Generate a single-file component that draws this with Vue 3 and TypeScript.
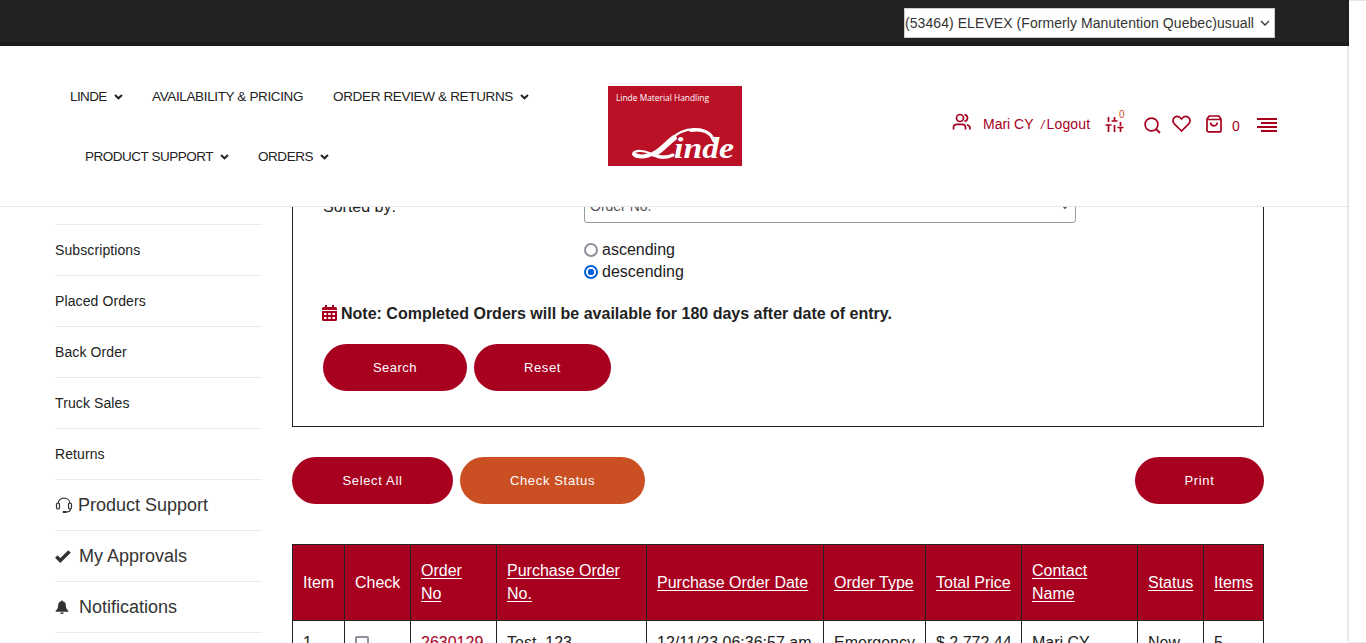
<script setup lang="ts">
interface NavItem { label: string; cls: string; arrow: boolean }
const primary: NavItem[] = [
  { label: 'LINDE', cls: 'n-linde', arrow: true },
  { label: 'AVAILABILITY & PRICING', cls: 'n-avail', arrow: false },
  { label: 'ORDER REVIEW & RETURNS', cls: 'n-review', arrow: true },
]
const secondary: NavItem[] = [
  { label: 'PRODUCT SUPPORT', cls: 'n-support', arrow: true },
  { label: 'ORDERS', cls: 'n-orders', arrow: true },
]
const links: string[] = ['Subscriptions', 'Placed Orders', 'Back Order', 'Truck Sales', 'Returns']
const columns: { label: string; sortable: boolean; width: number }[] = [
  { label: 'Item', sortable: false, width: 52 },
  { label: 'Check', sortable: false, width: 66 },
  { label: 'Order No', sortable: true, width: 86 },
  { label: 'Purchase Order No.', sortable: true, width: 150 },
  { label: 'Purchase Order Date', sortable: true, width: 177 },
  { label: 'Order Type', sortable: true, width: 102 },
  { label: 'Total Price', sortable: true, width: 96 },
  { label: 'Contact Name', sortable: true, width: 116 },
  { label: 'Status', sortable: true, width: 66 },
  { label: 'Items', sortable: true, width: 61 },
]
const row: string[] = ['1', '', '2630129', 'Test_123', '12/11/23 06:36:57 am', 'Emergency', '$ 2,772.44', 'Mari CY', 'New', '5']
</script>

<template>
  <div class="page">
    <div class="topbar">
      <div class="account">
        <span>(53464) ELEVEX (Formerly Manutention Quebec)usuall</span>
        <svg width="10" height="8" viewBox="0 0 10 8"><path d="M1 2l4 4 4-4" fill="none" stroke="#333" stroke-width="1.4" /></svg>
      </div>
    </div>
    <header class="header">
      <nav class="nav">
        <div class="nav-row">
          <a v-for="n in primary" :key="n.label" :class="['nav-item', n.cls]">
            <span>{{ n.label }}</span>
            <svg v-if="n.arrow" width="9" height="6" viewBox="0 0 9 6"><path d="M1 1l3.5 3.3L8 1" fill="none" stroke="#222" stroke-width="2" /></svg>
          </a>
        </div>
        <div class="nav-row second">
          <a v-for="n in secondary" :key="n.label" :class="['nav-item', n.cls]">
            <span>{{ n.label }}</span>
            <svg v-if="n.arrow" width="9" height="6" viewBox="0 0 9 6"><path d="M1 1l3.5 3.3L8 1" fill="none" stroke="#222" stroke-width="2" /></svg>
          </a>
        </div>
      </nav>
      <svg class="logo" width="134" height="80" viewBox="0 0 134 80">
        <rect width="134" height="80" fill="#ba1126" />
        <text x="8" y="15.3" class="logo-small" textLength="93" lengthAdjust="spacingAndGlyphs">Linde Material Handling</text>
        <text x="66" y="71.5" class="logo-word" textLength="60" lengthAdjust="spacingAndGlyphs">inde</text>
        <g fill="none" stroke="#fff" stroke-linecap="round">
          <path d="M105 54C102 42 84 41 73 46C61 52 55 61 47 67C40 71.500 34 72 29 71C22 69 25 64.500 33 65C43 65.500 49 73 63 70" stroke-width="2.200" />
          <path d="M66 52C59 57 54 64 46 68" stroke-width="5.500" />
          <path d="M83 44.500C94 42.500 103 46 106 55" stroke-width="3.200" />
          <path d="M27 68.500C31 71 36 70.500 41 68.500" stroke-width="3.500" />
          <path d="M46 69C51 72 58 72 65 69" stroke-width="3" />
        </g>
      </svg>
      <div class="tools">
        <svg class="i-users" width="20" height="18" viewBox="0 0 20 18"><g fill="none" stroke="#a8001f" stroke-width="1.7"><circle cx="8" cy="5" r="3.5" /><path d="M1.5 16.5v-1.8c0-2 1.5-3.3 3.4-3.3h5.2c2 0 3.4 1.3 3.4 3.3v1.8M12.5 1.6c4 .8 4 6 0 6.8M15 11.7c2.1.6 3 1.6 3 3.4v1.4" /></g></svg>
        <span class="user">Mari CY</span>
        <span class="logout"><i>/</i>Logout</span>
        <span class="compare">
          <svg width="20" height="18" viewBox="0 0 20 18"><path d="M3.500 2v5M3.500 10v7M.5 10h6M9.500 2v4M9.500 10v7M6.500 6h6M15.500 7v4M15.500 13v4M12.500 12.500h6" fill="none" stroke="#a8001f" stroke-width="1.700" /></svg>
          <span class="badge">0</span>
        </span>
        <svg class="i-search" width="17" height="17" viewBox="0 0 17 17"><circle cx="7.500" cy="7.500" r="6.400" fill="none" stroke="#a8001f" stroke-width="1.7" /><path d="M12 12l4 4" stroke="#a8001f" stroke-width="1.8" /></svg>
        <svg class="i-heart" width="19" height="18" viewBox="0 0 19 18"><path d="M9.500 16L2.300 8.800C.2 6.500.8 3.200 3.100 2C5.400.8 7.800 1.900 9.500 4C11.200 1.900 13.600.8 15.900 2C18.200 3.200 18.800 6.500 16.700 8.800Z" fill="none" stroke="#a8001f" stroke-width="1.7" /></svg>
        <svg class="i-bag" width="16" height="18" viewBox="0 0 16 18"><path d="M3.200 1h9.600L15 4v11.200c0 1-.6 1.700-1.700 1.700H2.700C1.600 16.900 1 16.200 1 15.200V4zM1 4.500h14M4.700 7.500c0 4.400 6.600 4.400 6.600 0" fill="none" stroke="#a8001f" stroke-width="1.7" stroke-linejoin="round" /></svg>
        <span class="count">0</span>
        <svg class="i-menu" width="20" height="14" viewBox="0 0 20 14"><path d="M0 1h20M4 5h16M0 9h20M4 13h16" stroke="#a8001f" stroke-width="2" /></svg>
      </div>
    </header>

    <div class="body">
      <aside class="side">
        <div class="side-top"></div>
        <a v-for="l in links" :key="l" class="side-link">{{ l }}</a>
        <a class="side-link large"><svg width="18" height="18" viewBox="0 0 18 18"><g fill="none" stroke="#333" stroke-width="1.200"><path d="M3 8C3 .2 15 .2 15 8" /><rect x="1.500" y="7" width="3" height="6" rx="1.400" /><rect x="13.500" y="7" width="3" height="6" rx="1.400" /><path d="M15.500 13c0 2.300-1.500 3-4 3" /></g><rect x="7.500" y="15" width="4.500" height="2" rx="1" fill="#333" /></svg><span class="first">Product Support</span></a>
        <a class="side-link large"><svg width="18" height="18" viewBox="0 0 18 18"><path d="M1.300 9.500l4 4L14.500 4.500" fill="none" stroke="#333" stroke-width="3.500" /></svg><span>My Approvals</span></a>
        <a class="side-link large"><svg width="18" height="18" viewBox="0 0 18 18"><path d="M6.300 2.500h1.400V3.300c2 .5 3 1.700 3.200 4.200.1 2.500.7 3.700 2.500 5.300v.9H.6v-.9c1.800-1.600 2.400-2.800 2.500-5.300.2-2.500 1.200-3.700 3.200-4.200zM5.300 14.500h3.400c0 2-3.400 2-3.400 0z" fill="#333" /></svg><span>Notifications</span></a>
      </aside>

      <main class="main">
        <section class="filter">
          <div class="field">
            <label class="label">Sorted by:</label>
            <div class="select"><span>Order No.</span><svg width="10" height="7" viewBox="0 0 10 7"><path d="M1.500 1l3.500 4 3.500-4" fill="none" stroke="#555" stroke-width="1.8" /></svg></div>
          </div>
          <div class="radios">
            <div class="radio"><span class="dot"></span>ascending</div>
            <div class="radio"><span class="dot on"></span>descending</div>
          </div>
          <div class="note">
            <svg width="15" height="16" viewBox="0 0 15 16"><path d="M0 5V3.500Q0 2 1.500 2H3V0h2v2h5V0h2v2h1.500Q15 2 15 3.500V5zM0 6h15v8.500q0 1.500-1.500 1.500h-12Q0 16 0 14.500z" fill="#a8001f" /><path d="M2 8h2.500v2H2zM6.200 8h2.500v2H6.200zM10.500 8H13v2h-2.500zM2 12h2.500v2H2zM6.200 12h2.500v2H6.200zM10.500 12H13v2h-2.500z" fill="#fff" /></svg>
            <b>Note: Completed Orders will be available for 180 days after date of entry.</b>
          </div>
          <div class="buttons"><button class="btn w-search">Search</button><button class="btn w-reset">Reset</button></div>
        </section>
        <div class="actions">
          <button class="btn w-all">Select All</button>
          <button class="btn w-status">Check Status</button>
          <button class="btn w-print">Print</button>
        </div>
        <table class="orders">
          <colgroup><col v-for="c in columns" :key="c.label" :style="{ width: c.width + 'px' }" /></colgroup>
          <thead><tr><th v-for="c in columns" :key="c.label" :class="{ narrow: c.label === 'Order No' }"><span :class="{ sort: c.sortable }">{{ c.label }}</span></th></tr></thead>
          <tbody><tr><td v-for="(v, i) in row" :key="i" :class="{ link: i === 2 }"><span v-if="i === 1" class="box"></span><template v-else>{{ v }}</template></td></tr></tbody>
        </table>
      </main>
    </div>
    <div class="drawer"></div>
  </div>
</template>

<style>
html, body { margin: 0; overflow: hidden; background: #fff; }
</style>

<style scoped>
* { box-sizing: border-box; }
.page { position: relative; width: 1366px; height: 643px; overflow: hidden; font-family: "Liberation Sans", Arial, sans-serif; color: #222; background: #fff; }
svg { display: block; flex: none; }
.topbar { height: 46px; background: #222; border-bottom: 4px solid #1f1c1e; padding: 8px 0 0 904px; }
.account { width: 371px; height: 30px; border: 1px solid #ccc; background: #fff; color: #333; display: flex; align-items: center; font-size: 14px; line-height: 28px; white-space: nowrap; }
.account span { width: 349px; letter-spacing: .07px; }
.account svg { margin-left: 6px; }
.header { height: 161px; border-bottom: 1px solid #e7e7e7; display: flex; background: #fff; }
.nav { width: 608px; padding-top: 20px; }
.nav-row { display: flex; height: 60px; align-items: center; padding-left: 70px; }
.nav-row.second { padding-left: 85px; }
.nav-item { display: flex; align-items: center; font-size: 13.5px; white-space: nowrap; }
.nav-item svg { margin-left: 6.5px; margin-top: 1px; }
.n-linde { width: 82px; }
.n-linde span { width: 37px; letter-spacing: -.6px; }
.n-avail { width: 181px; }
.n-avail span { letter-spacing: -.36px; }
.n-review span { width: 180px; letter-spacing: -.34px; }
.n-support { width: 173px; }
.n-support span { width: 128px; letter-spacing: -.48px; }
.n-orders span { width: 55px; letter-spacing: -.45px; }
.logo { margin-top: 40px; }
.logo-small { font: 9.500px "Open Sans", "Noto Sans", sans-serif; fill: #fff; }
.logo-word { font: italic bold 29px "Liberation Serif", serif; fill: #fff; }
.tools { display: flex; align-items: flex-start; color: #a8001f; font-size: 14px; line-height: 18px; margin-left: 210px; padding-top: 66px; white-space: nowrap; }
.i-users { margin-top: 1px; }
.user { margin: 3px 0 0 11px; width: 58px; }
.logout { margin-top: 3px; width: 64px; letter-spacing: .16px; }
.logout i { font-size: 12px; margin-right: 2px; }
.compare { position: relative; margin-top: 3px; width: 40px; }
.badge { position: absolute; left: 14px; top: -7px; font-size: 10px; line-height: 14px; color: #ca5023; }
.i-search { margin: 5px 0 0 -1px; }
.i-heart { margin: 3px 0 0 10.5px; }
.i-bag { margin: 3px 0 0 15.5px; }
.count { margin: 5px 0 0 10px; width: 25px; }
.i-menu { margin-top: 6px; }
.body { display: flex; height: 436px; overflow: hidden; padding-left: 55px; }
.side { width: 207px; flex: none; }
.side-top { height: 18px; border-bottom: 1px solid #eaeaea; }
.side-link { height: 51px; border-bottom: 1px solid #eaeaea; display: flex; align-items: center; font-size: 14px; letter-spacing: .1px; }
.side-link.large { font-size: 18px; color: #333; letter-spacing: 0; }
.side-link.large span { margin-left: 6px; }
.side-link.large .first { margin-left: 5px; }
.main { width: 972px; margin-left: 30px; flex: none; }
.filter { height: 237px; border: 1px solid #222; border-top: 0; padding-left: 30px; font-size: 16px; }
.field { display: flex; height: 33px; margin-top: -17px; }
.label { width: 261px; line-height: 33px; }
.select { width: 492px; height: 33px; border: 1px solid #999; border-radius: 3px; display: flex; align-items: center; justify-content: space-between; padding: 0 5px 2px; font-size: 14px; color: #555; }
.select svg { margin-top: 2px; }
.radios { margin: 16px 0 0 261px; }
.radio { height: 22px; display: flex; align-items: center; gap: 4px; }
.dot { width: 14px; height: 14px; border: 2px solid #8f8f9d; border-radius: 50%; }
.dot.on { border-color: #0060df; background: radial-gradient(circle, #0060df 3px, #fff 3.500px); }
.note { height: 24px; margin-top: 19px; display: flex; align-items: center; gap: 4px; white-space: nowrap; margin-left: -1px; }
.note svg { margin-top: -2px; }
.buttons { display: flex; gap: 7px; margin-top: 18px; }
.btn { border: 0; height: 47px; border-radius: 24px; padding: 0; background: #a8001f; color: #fff; font: 13px/47px "Liberation Sans", Arial, sans-serif; letter-spacing: .65px; text-align: center; }
.w-search { width: 144px; letter-spacing: .5px; }
.w-reset { width: 137px; }
.w-all { width: 161px; }
.w-status { width: 185px; background: #ca5023; }
.w-print { width: 129px; margin-left: auto; }
.actions { display: flex; gap: 7px; margin-top: 30px; height: 87px; }
.orders { width: 972px; table-layout: fixed; border-spacing: 0; font-size: 16px; line-height: 23px; }
.orders th { height: 76px; background: #a8001f; color: #fff; font-weight: normal; text-align: left; vertical-align: middle; padding: 0 9px 1px 10px; border: solid #222; border-width: 1px 0 0 1px; }
.orders th.narrow { padding-right: 15px; }
.orders td { height: 44px; vertical-align: middle; padding: 0 0 0 10px; border: solid #222; border-width: 1px 0 0 1px; white-space: nowrap; }
.orders th:last-child, .orders td:last-child { border-right-width: 1px; }
.sort { text-decoration: underline; text-decoration-thickness: 1px; text-underline-offset: 2px; text-decoration-skip-ink: none; }
.link { color: #a8001f; }
.box { display: block; width: 14px; height: 14px; border: 2px solid #8f8f9d; border-radius: 2px; }
.drawer { position: absolute; left: 1349px; top: 0; width: 18px; height: 643px; background: #fff; border: 1px solid #e7e7e7; border-width: 1px 0; box-shadow: 0 0 3px rgba(0, 0, 0, .3); }
</style>
